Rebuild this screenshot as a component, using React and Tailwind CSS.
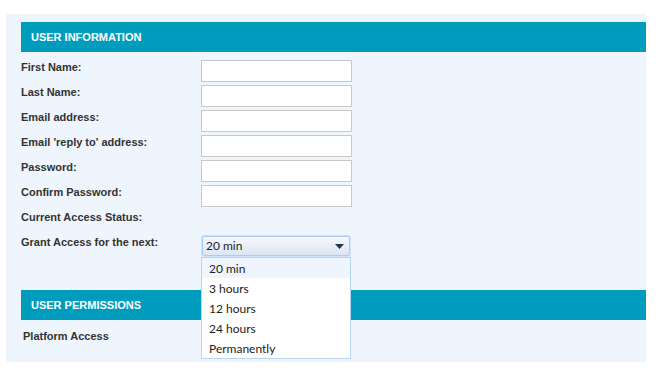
const fields = [
  'First Name:',
  'Last Name:',
  'Email address:',
  "Email 'reply to' address:",
  'Password:',
  'Confirm Password:',
];

const options = ['20 min', '3 hours', '12 hours', '24 hours', 'Permanently'];

const SectionHeader = ({ title }) => (
  <div className="h-[30px] bg-[#009cbd] flex items-center pl-[10px]">
    <span className="text-[11px] font-bold text-white leading-[13px]">{title}</span>
  </div>
);

const Label = ({ children }) => (
  <div className="w-[180px] shrink-0 pt-[1px] text-[11px] font-bold leading-[13px] text-[#333]">{children}</div>
);

export default function App() {
  return (
    <div className="w-[660px] h-[379px] bg-white pt-[14px] pl-[6px] font-['Liberation_Sans',Arial,sans-serif]">
      <div className="w-[640px] h-[348px] bg-[#eef5fd] pt-[8px] pl-[15px]">
        <SectionHeader title="USER INFORMATION" />

        {/* Text inputs */}
        <div className="mt-[8px] flex flex-col">
          {fields.map((f) => (
            <div key={f} className="h-[25px] flex items-start">
              <Label>{f}</Label>
              <input
                type={f.includes('Password') ? 'password' : 'text'}
                className="w-[151px] h-[22px] bg-white border border-[#c8c8c8] outline-none"
              />
            </div>
          ))}
          <div className="h-[25px] flex items-start">
            <Label>Current Access Status:</Label>
          </div>
          <div className="h-[55px] flex items-start">
            <Label>Grant Access for the next:</Label>
            <div className="relative mt-[1px] ml-[1px]">
              <div className="w-[148px] h-[20px] rounded-[2px] border border-[#a9cdf7] shadow-[0_0_0_1px_#cfe3fb] bg-gradient-to-b from-[#f7f9fc] to-[#dbe5f3] flex items-center justify-between pl-[3px] pr-[5px]">
                <span className="text-[12px] leading-[14px] text-[#222] font-['Lato',sans-serif]">20 min</span>
                <svg width="9" height="5" viewBox="0 0 9 5">
                  <path d="M0 0 H9 L4.5 5 Z" fill="#1f3552" />
                </svg>
              </div>
              {/* Open dropdown list */}
              <div className="absolute left-[-1px] top-[21px] w-[150px] bg-white border border-[#b5d4f7] z-10">
                {options.map((o, i) => (
                  <div
                    key={o}
                    className={`h-[20px] flex items-center pt-[1px] pl-[7px] text-[12px] text-[#222] font-['Lato',sans-serif] ${
                      i === 0 ? 'bg-[#eef5fd]' : 'bg-white'
                    }`}
                  >
                    {o}
                  </div>
                ))}
              </div>
            </div>
          </div>
        </div>

        <SectionHeader title="USER PERMISSIONS" />
        <div className="pt-[10px] pl-[2px] text-[11px] font-bold leading-[13px] text-[#333]">Platform Access</div>
      </div>
    </div>
  );
}
